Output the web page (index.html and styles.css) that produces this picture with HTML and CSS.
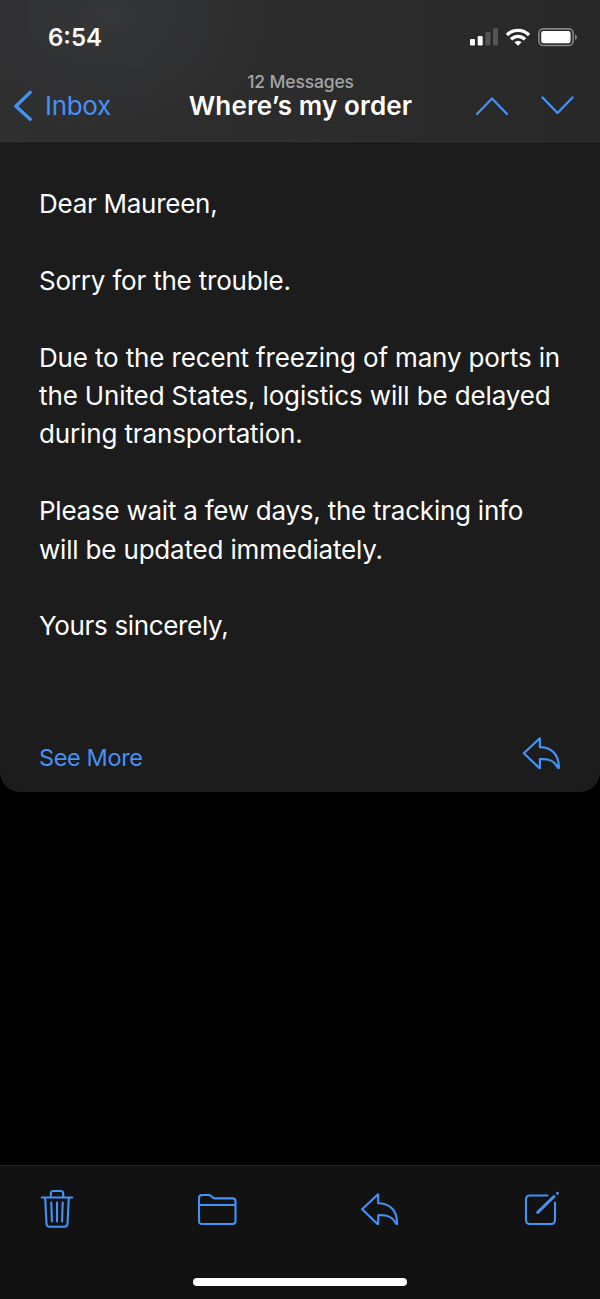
FILE: index.html
```html
<!DOCTYPE html>
<html lang="en">
<head>
<meta charset="utf-8">
<title>Where’s my order</title>
<link rel="stylesheet" href="styles.css">
</head>
<body>
<div class="screen">
  <header class="header">
    <div class="status">
      <span class="time">6:54</span>
      <svg class="status-icons" width="108" height="20" viewBox="0 0 108 20">
        <g fill="#fff"><rect x="0" y="11" width="5" height="6.5" rx="1.2"/><rect x="7.7" y="8" width="5" height="9.5" rx="1.2"/></g>
        <g fill="#545454"><rect x="15.4" y="4" width="5" height="13.5" rx="1.2"/><rect x="23" y="0.3" width="5" height="17.2" rx="1.2"/></g>
        <g fill="none" stroke="#fff" stroke-width="3.3"><path d="M37 7a15.2 15.2 0 0 1 22 0"/><path d="M41 11.4a9.6 9.6 0 0 1 14 0"/></g>
        <path d="M48 17.7l-3.600-3.500q3.600-3 7.200 0z" fill="#fff"/>
        <rect x="68.9" y="0.9" width="34.2" height="16.6" rx="4.4" fill="none" stroke="#858585" stroke-width="1.6"/>
        <rect x="71.2" y="3" width="29.4" height="12.3" rx="2.4" fill="#fff"/>
        <path d="M105 6.2q2 .8 2 3t-2 3z" fill="#858585"/>
      </svg>
    </div>
    <nav class="nav">
      <a class="back">
        <svg width="20" height="32" viewBox="0 0 20 32" fill="none" stroke="#4592f6" stroke-width="3.4" stroke-linecap="round" stroke-linejoin="round"><path d="M17.2 2.400L2.900 16.200l14.300 13"/></svg>
        <span class="back-label">Inbox</span>
      </a>
      <div class="heading">
        <div class="count">12 Messages</div>
        <h1 class="title">Where’s my order</h1>
      </div>
      <svg class="arrows" width="100" height="20" viewBox="0 0 100 20" fill="none" stroke="#4592f6" stroke-width="2.3" stroke-linecap="round" stroke-linejoin="round"><path d="M2 18L17 2.500 32 18M67.500 1.500l15 15.500 15-15.500"/></svg>
    </nav>
  </header>
  <main class="message">
    <div class="body">
      <p><span class="l1">Dear Maureen,</span></p>
      <p><span class="l2">Sorry for the trouble.</span></p>
      <p><span class="l3">Due to the recent freezing of many ports in</span><br><span class="l4">the United States, logistics will be delayed</span><br><span class="l5">during transportation.</span></p>
      <p><span class="l6">Please wait a few days, the tracking info</span><br><span class="l7">will be updated immediately.</span></p>
      <p><span class="l8">Yours sincerely,</span></p>
    </div>
    <div class="actions">
      <a class="more">See More</a>
      <svg class="reply" width="39" height="34" viewBox="0 0 39 34"><path d="M17.9 1.7Q17.9 1 17.2 1.700L1.800 16.200 17.200 30.900Q17.900 31.400 17.900 30.700V22.200C27 21.600 32.300 23.700 36 30.700Q36.700 31.700 36.800 30.600C37 17.700 29.500 10.200 17.900 10.200Z"/></svg>
    </div>
  </main>
  <footer class="toolbar">
    <div class="tools">
      <svg width="34" height="40" viewBox="0 0 34 40"><path d="M1.800 9.500h30.400M10.800 9V5.500q0-2.500 2.500-2.500h7.400q2.500 0 2.500 2.500V9M5.200 10l1.300 26q.2 2.700 3 2.700h15q2.800 0 3-2.700l1.300-26M17 14.500v19M11.300 14.500l.6 19M22.700 14.500l-.6 19"/></svg>
      <svg width="40" height="40" viewBox="0 0 40 40"><path d="M2 33V10q0-3 3-3h6.500q1.500 0 2.600 1l1.600 1.500q1 .9 2.500.9H35.500q3 0 3 3V33q0 3-3 3H5q-3 0-3-3zM2 17h36.500"/></svg>
      <svg class="reply" width="40" height="34" viewBox="0.7 0 40 34"><path d="M17.9 1.7Q17.9 1 17.2 1.700L1.800 16.200 17.200 30.900Q17.900 31.400 17.900 30.700V22.200C27 21.600 32.300 23.700 36 30.700Q36.700 31.700 36.800 30.600C37 17.700 29.500 10.200 17.900 10.200Z"/></svg>
      <svg width="36" height="40" viewBox="0 0 36 40"><path d="M23.500 7.500H6q-4 0-4 4V32q0 4 4 4h21q4 0 4-4V14.500"/><path class="pen" d="M13.700 24.300L30 8.500M33.400 5.200v0"/></svg>
    </div>
    <div class="home"></div>
  </footer>
</div>
</body>
</html>
```
FILE: styles.css
```css
* { box-sizing: border-box; }
body { margin: 0; background: #000; color: #fff; font-family: Inter, "Liberation Sans", sans-serif; }
.screen { width: 600px; height: 1299px; display: flex; flex-direction: column; }
.header { height: 142px; border-bottom: 1px solid #363636; background: radial-gradient(ellipse 160px 120px at 110px 15px, #353638, transparent), linear-gradient(90deg, #2f2f30, #2c2c2c 45%, #282828); }
.status { height: 72px; padding: 22px 22px 0 48px; display: flex; justify-content: space-between; align-items: flex-start; }
.time { font-size: 24px; font-weight: 600; line-height: 31px; }
.status-icons { margin-top: 6px; }
.nav { height: 69px; padding: 0 25px 0 13px; display: grid; grid-template-columns: 176px 223px 1fr; align-items: start; }
.back { display: flex; gap: 12px; padding-top: 18px; color: #4592f6; font-size: 26px; line-height: 32px; letter-spacing: -0.3px; }
.heading { text-align: center; white-space: nowrap; }
.count { font-size: 17.5px; line-height: 20px; color: #a3a3a7; font-weight: 500; letter-spacing: -0.15px; }
.title { margin: 0 -10px; font-size: 26px; line-height: 28px; font-weight: 600; letter-spacing: 0.15px; }
.arrows { justify-self: end; margin-top: 24px; }
.message { height: 650px; padding: 43px 39px 0; background: #1c1c1c; border-radius: 0 0 20px 20px; display: flex; flex-direction: column; }
.body { font-size: 26px; line-height: 38.4px; white-space: nowrap; height: 549px; }
.body p { margin: 0 0 38.4px; }
.l1 { letter-spacing: -0.27px; }
.l2 { letter-spacing: -0.2px; }
.l3 { letter-spacing: -0.15px; }
.l4 { letter-spacing: -0.125px; }
.l5 { letter-spacing: -0.13px; }
.l6 { letter-spacing: -0.24px; }
.l7 { letter-spacing: -0.18px; }
.l8 { letter-spacing: -0.34px; }
.actions { display: flex; justify-content: space-between; align-items: flex-start; }
.more { color: #4592f6; font-size: 23.5px; line-height: 30px; padding-top: 9px; letter-spacing: -0.38px; }
.reply { fill: none; stroke: #4592f6; stroke-width: 2.2; stroke-linejoin: round; }
.message .reply { margin-top: 3px; }
.toolbar { margin-top: auto; height: 134px; background: #121212; border-top: 1px solid #222; display: flex; flex-direction: column; align-items: center; }
.tools { width: 100%; height: 112px; padding: 22px 40px 0; display: flex; justify-content: space-between; align-items: flex-start; }
.tools svg { fill: none; stroke: #4592f6; stroke-width: 2.1; stroke-linecap: round; stroke-linejoin: round; }
.tools .reply { margin-top: 5px; }
.tools .pen { stroke-width: 3; }
.home { width: 214px; height: 8px; border-radius: 4px; background: #fff; }
```
